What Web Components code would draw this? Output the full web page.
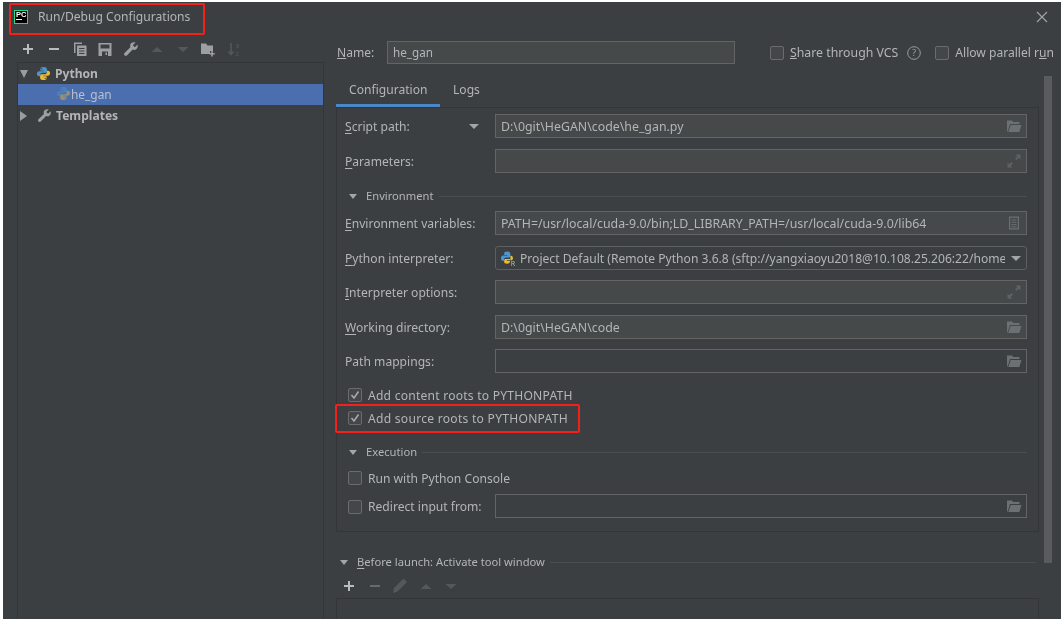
<!DOCTYPE html>
<html>
<head>
<meta charset="utf-8">
<title>Run/Debug Configurations</title>
<style>
  html, body { margin: 0; height: 100%; background: #fff; overflow: hidden; }
  u { text-underline-offset: 2px; }
</style>
</head>
<body>
<rd-dialog>
  <rd-tree slot="left"></rd-tree>

  <rd-name-row slot="right"></rd-name-row>
  <rd-tabs slot="right"></rd-tabs>
  <rd-panel slot="right">
    <rd-field icon="folder" filled drop><u>S</u>cript path:<span slot="value">D:\0git\HeGAN\code\he_gan.py</span></rd-field>
    <rd-field icon="expand" filled style="margin-top:11px"><u>P</u>arameters:</rd-field>
    <rd-section style="margin-top:13px">Environment</rd-section>
    <rd-field icon="doc" filled style="margin-top:5px"><u>E</u>nvironment variables:<span slot="value">PATH=/usr/local/cuda-9.0/bin;LD_LIBRARY_PATH=/usr/local/cuda-9.0/lib64</span></rd-field>
    <rd-field combo style="margin-top:11px"><u>P</u>ython interpreter:<span slot="value">Project Default (Remote Python 3.6.8 (sftp://yangxiaoyu2018@10.108.25.206:22/home</span></rd-field>
    <rd-field icon="expand" filled style="margin-top:10px"><u>I</u>nterpreter options:</rd-field>
    <rd-field icon="folder" filled style="margin-top:11px"><u>W</u>orking directory:<span slot="value">D:\0git\HeGAN\code</span></rd-field>
    <rd-field icon="folder" style="margin-top:10px">Path mappings:</rd-field>
    <rd-check checked style="margin:12px 0 0 3px;letter-spacing:.22px;--tshift:2px">Add content roots to PYTHONPATH</rd-check>
    <rd-check checked style="margin:3px 0 0 3px;letter-spacing:.26px;--tshift:2px">Add source roots to PYTHONPATH</rd-check>
    <rd-section style="margin-top:14px">Execution</rd-section>
    <rd-check style="margin:6px 0 0 3px;--tshift:2px">Run with Python Console</rd-check>
    <rd-field icon="folder" style="margin-top:6px"><rd-check style="margin-left:3px">Redirect input from:</rd-check></rd-field>
  </rd-panel>
  <rd-section slot="right" wide style="margin-top:20px"><u>B</u>efore launch: Activate tool window</rd-section>
  <rd-launch-tools slot="right"></rd-launch-tools>
  <rd-listbox slot="right"></rd-listbox>
</rd-dialog>

<script>
// all small icons live here, 16x16 viewBox unless noted
const ICONS = {
  plus: '<path d="M8 3v10M3 8h10" stroke="#b9bcbe" stroke-width="2"/>',
  minus: '<path d="M3 8h10" stroke="#b9bcbe" stroke-width="2"/>',
  copy: '<path d="M2 1.500h8V3H3.500v9H2z" fill="#9da0a2"/><path fill-rule="evenodd" d="M5 4.500h9.500V15H5zM7 7v1h5.500V7zm0 2.500v1h5.500v-1zm0 2.500v1h5.500v-1z" fill="#9da0a2"/>',
  save: '<path fill-rule="evenodd" d="M1.500 2h13v13h-13zM3.500 3.500V7.500h9V3.500zM5 10.500V15h6v-4.500zM8.500 11.500h1.500v2.500H8.500z" fill="#9da0a2"/>',
  wrench: '<path d="M14.500 3.500 11.800 6.200 9.800 4.200 12.500 1.500C10.500.8 8 1.500 7.300 3.600 7 4.600 7.100 5.500 7.400 6.300L1.600 12.100C.9 12.800.9 13.800 1.600 14.400 2.200 15 3.200 15 3.900 14.400L9.700 8.600C10.500 8.900 11.500 9 12.400 8.700 14.500 8 15.200 5.500 14.500 3.500Z" fill="#9da0a2"/>',
  up: '<path d="M2.500 11 8 6l5.500 5z" fill="#55585a"/>',
  down: '<path d="M2.500 6h11L8 11z" fill="#55585a"/>',
  newfolder: '<path d="M1 2.500h5L7.500 4.500H13v5.500H10v3H1z" fill="#9da0a2"/><path d="M12 10v5.500M9.200 12.800h5.500" stroke="#9da0a2" stroke-width="1.600"/>',
  sort: '<path d="M5 2v11M2.500 10.500 5 13.500l2.500-3" fill="none" stroke="#55585a" stroke-width="1.600"/><text x="9.500" y="7" font-size="7" font-family="Noto Sans" fill="#55585a">a</text><text x="9.500" y="14.500" font-size="7" font-family="Noto Sans" fill="#55585a">z</text>',
  python: '<path d="M8 1C5.300 1 4.700 2 4.700 3.200V5H8.300V5.600H3.200C1.900 5.600 1 6.700 1 8.300 1 10 1.800 11 3.100 11H4.500V9.200C4.500 8 5.500 7.200 6.700 7.200H10C11 7.200 11.600 6.500 11.600 5.600V3.200C11.600 2 10.500 1 8 1ZM6.200 2.200A.7.7 0 1 1 6.200 3.600.7.7 0 0 1 6.200 2.200Z" fill="#4a97cf"/><path d="M8 15C10.700 15 11.300 14 11.300 12.800V11H7.700V10.400H12.800C14.100 10.400 15 9.300 15 7.700 15 6 14.200 5 12.900 5H11.500V6.800C11.500 8 10.500 8.800 9.300 8.800H6C5 8.800 4.400 9.500 4.400 10.400V12.800C4.400 14 5.500 15 8 15ZM9.800 13.800A.7.7 0 1 1 9.800 12.400.7.7 0 0 1 9.800 13.800Z" fill="#e9bb31"/>',
  pyremote: '<path d="M6.500 0.500C4 .5 3.400 1.500 3.400 2.600V4.300H6.800V4.900H2.200C1 4.900 0 6 0 7.700 0 9.400.8 10.500 2 10.500H3.300V8.800C3.300 7.700 4.200 6.900 5.300 6.900H8.300C9.300 6.900 9.900 6.200 9.900 5.300V2.600C9.900 1.500 8.900.5 6.500.5Z" fill="#4a97cf"/><path d="M6.500 13.500C8.400 13.500 9 12.800 9.500 12V10.300H6.200V9.700H10V5H10.700C12 5 12.800 6 12.800 7.500 12.800 8.800 12 9.800 11.500 9.800H9.500V10 8.600H5C4 8.600 3.400 9.300 3.400 10.200V12C3.400 13 4.400 13.500 6.500 13.500Z" fill="#e9bb31"/><text x="10.500" y="16" font-size="7.500" font-family="Noto Sans" fill="#b9bcbe">R</text>',
  folder: '<path d="M1 2.500h5L7.200 4H13.500V6H4L1.700 13.500H1z" fill="#6b7072"/><path d="M4.700 7H15.500L13.300 14H2.300z" fill="#6b7072"/>',
  expand: '<path d="M9.500 1.500H14.500V6.500L12.700 4.700 10.500 6.900 9.100 5.500 11.300 3.300zM6.500 14.500H1.500V9.500L3.300 11.300 5.500 9.100 6.900 10.500 4.700 12.700z" fill="#5d6264"/>',
  doc: '<path fill-rule="evenodd" d="M3 1.500h10v13H3zM4.200 2.700v10.600h7.600V2.700z" fill="#6b7072"/><path d="M5.500 5h5M5.500 7.300h5M5.500 9.600h5M5.500 11.800h5" stroke="#6b7072"/>',
  help: '<circle cx="8" cy="8" r="6.300" fill="none" stroke="#9a9d9f" stroke-width="1"/><text x="8" y="11.300" text-anchor="middle" font-size="9.500" font-family="Noto Sans" fill="#9a9d9f">?</text>',
  pencil: '<path d="M11.500 .5 15 4 5.500 13.500 1 15 2 10z" fill="#55585a"/>',
  close: '<path d="M3 3l10 10M13 3 3 13" stroke="#a3a6a8" stroke-width="1.100"/>'
};

class RdIcon extends HTMLElement {
  connectedCallback() {
    const size = this.getAttribute('size') || 16;
    this.attachShadow({ mode: 'open' }).innerHTML = `
      <style>:host{display:inline-flex;flex:none;width:${size}px;height:${size}px}svg{display:block;overflow:visible}</style>
      <svg width="${size}" height="${size}" viewBox="0 0 16 16">${ICONS[this.getAttribute('name')] || ''}</svg>`;
  }
}

class RdDialog extends HTMLElement {
  constructor() {
    super();
    this.attachShadow({ mode: 'open' }).innerHTML = `
      <style>
        /* the reference is a scaled screenshot, hence the slight blur */
        :host { display: block; position: relative; box-sizing: border-box; margin: 2px 0 0 3px; height: 617px; overflow: hidden; filter: blur(.35px);
                background: #3c3f41; color: #b3b5b7; font: 12.1px/16px "Noto Sans", "Liberation Sans", sans-serif; }
        .title { display: flex; align-items: center; height: 30px; padding-left: 11px; }
        .logo { display: flex; flex-direction: column; box-sizing: border-box; width: 14px; height: 14px; margin-right: 10px;
                background: #000; border: 1px solid #21d789; color: #fff; font: 700 7.500px/7px "Liberation Sans", sans-serif; padding-left: 1px; }
        .logo i { display: block; width: 6px; height: 1px; margin-top: 1px; background: #fff; }
        .close { margin-left: auto; margin-right: 11px; }
        .body { display: flex; }
        .left { width: 321px; flex: none; padding-left: 14px; box-sizing: border-box; }
        .tools { display: flex; align-items: center; height: 30px; padding: 4px 0 0 3px; box-sizing: border-box; }
        .tools rd-icon { margin-right: 9.750px; }
        .right { width: 703px; margin-left: 12px; flex: none; }
        .scroll { position: absolute; left: 1041px; top: 74px; width: 8px; height: 487px; background: #595b5d; }
        .mark { position: absolute; box-sizing: border-box; border: 2px solid #f5201a; border-radius: 2px; }
      </style>
      <div class="title">
        <div class="logo"><span>PC</span><i></i></div>
        <span>Run/Debug Configurations</span>
        <rd-icon class="close" name="close"></rd-icon>
      </div>
      <div class="body">
        <div class="left">
          <div class="tools">
            <rd-icon name="plus"></rd-icon><rd-icon name="minus"></rd-icon><rd-icon name="copy"></rd-icon><rd-icon name="save"></rd-icon><rd-icon name="wrench"></rd-icon><rd-icon name="up"></rd-icon><rd-icon name="down"></rd-icon><rd-icon name="newfolder"></rd-icon><rd-icon name="sort"></rd-icon>
          </div>
          <slot name="left"></slot>
        </div>
        <div class="right"><slot name="right"></slot></div>
      </div>
      <div class="scroll"></div>
      <!-- the two red marks somebody drew on the screenshot -->
      <div class="mark" style="left:6px;top:1px;width:196px;height:32px"></div>
      <div class="mark" style="left:332px;top:402px;width:245px;height:29px"></div>`;
  }
}

class RdTree extends HTMLElement {
  constructor() {
    super();
    this.attachShadow({ mode: 'open' }).innerHTML = `
      <style>
        :host { display: block; width: 307px; height: 570px; box-sizing: border-box; border: 1px solid #333537; }
        .row { display: flex; align-items: center; box-sizing: border-box; height: 21px; font-weight: 700; }
        .arrow { width: 0; height: 0; flex: none; margin-left: 2px; }
        .open { border-left: 4.500px solid transparent; border-right: 4.500px solid transparent; border-top: 8px solid #9a9d9f; margin-right: 8px; }
        .shut { border-top: 5px solid transparent; border-bottom: 5px solid transparent; border-left: 7px solid #9a9d9f; margin-right: 10px; }
        .row rd-icon { margin-right: 4px; }
        .sel { background: #4b6eaf; padding: 0 0 2px 38px; font-weight: 400; font-size: 11.900px; color: #b9c0cc; }
        .sel rd-icon { opacity: .45; margin-right: 0; }
      </style>
      <div class="row"><span class="arrow open"></span><rd-icon name="python" size="15"></rd-icon>Python</div>
      <div class="row sel"><rd-icon name="python" size="15"></rd-icon>he_gan</div>
      <div class="row"><span class="arrow shut"></span><rd-icon name="wrench" size="15"></rd-icon>Templates</div>`;
  }
}

class RdCheck extends HTMLElement {
  constructor() {
    super();
    this.attachShadow({ mode: 'open' }).innerHTML = `
      <style>
        :host { display: flex; align-items: center; height: 20px; white-space: nowrap; }
        .box { box-sizing: border-box; width: 14px; height: 14px; margin-right: 6px; flex: none; border: 1px solid #6b6b6b; border-radius: 2px; background: #43474a; }
        svg { display: none; margin: 1px; }
        :host([checked]) svg { display: block; }
        .txt { padding-top: var(--tshift, 0); }
      </style>
      <div class="box"><svg width="10" height="10" viewBox="0 0 10 10"><path d="M1.500 5 4 8l4.500-6.500" fill="none" stroke="#a9acae" stroke-width="1.500"/></svg></div>
      <span class="txt"><slot></slot></span>`;
  }
}

class RdNameRow extends HTMLElement {
  constructor() {
    super();
    this.attachShadow({ mode: 'open' }).innerHTML = `
      <style>
        :host { display: flex; align-items: center; height: 23px; margin-top: 9px; white-space: nowrap; width: 740px; }
        .lbl { width: 50px; margin-left: 1px; flex: none; }
        .input { width: 348px; height: 23px; box-sizing: border-box; flex: none; padding: 2px 5px; background: #45494a; border: 1px solid #646464; font-size: 11.700px; }
        rd-check:first-of-type { margin-left: 35px; font-size: 12.300px; }
        rd-icon { margin: 0 13px 0 8px; }
      </style>
      <span class="lbl"><u>N</u>ame:</span>
      <div class="input">he_gan</div>
      <rd-check><u>S</u>hare through VCS</rd-check>
      <rd-icon name="help"></rd-icon>
      <rd-check>Allow parallel r<u>u</u>n</rd-check>`;
  }
}

class RdTabs extends HTMLElement {
  constructor() {
    super();
    this.attachShadow({ mode: 'open' }).innerHTML = `
      <style>
        :host { display: flex; margin-top: 8px; height: 35px; }
        .tab { box-sizing: border-box; padding: 10px 13px 0; }
        .on { width: 104px; border-bottom: 3px solid #4a88c7; }
      </style>
      <div class="tab on">Configuration</div>
      <div class="tab">Logs</div>`;
  }
}

class RdPanel extends HTMLElement {
  constructor() {
    super();
    this.attachShadow({ mode: 'open' }).innerHTML = `
      <style>
        /* --tshift nudges text down inside the rows, the box stays put */
        :host { display: block; box-sizing: border-box; width: 703px; border: 1px solid #333537; padding: 6px 11px 13px 8px; --tshift: 1px; }
      </style>
      <slot></slot>`;
  }
}

class RdField extends HTMLElement {
  constructor() {
    super();
    const icon = this.getAttribute('icon');
    this.attachShadow({ mode: 'open' }).innerHTML = `
      <style>
        :host { display: flex; align-items: center; height: 24px; white-space: nowrap; }
        .lbl { display: flex; align-items: center; width: 150px; flex: none; }
        .txt { padding-top: var(--tshift, 0); }
        .drop { margin-left: auto; margin-right: 16px; width: 0; height: 0; border-left: 5px solid transparent; border-right: 5px solid transparent; border-top: 5px solid #a3a6a8; display: none; }
        :host([drop]) .drop { display: block; }
        .input { display: flex; align-items: center; box-sizing: border-box; width: 532px; height: 24px; padding: 0 5px; border: 1px solid #646464; overflow: hidden; }
        :host([filled]) .input { background: #45494a; }
        :host([combo]) .input { border-color: #5e6060; border-radius: 3px; }
        .val { flex: 1; min-width: 0; overflow: hidden; font-size: 12.350px; padding-top: var(--tshift, 0); }
        :host([combo]) .val { font-size: 12.100px; }
        .py, .arrow { flex: none; display: none; }
        :host([combo]) .py { display: inline-flex; margin-right: 4px; }
        :host([combo]) .arrow { display: block; width: 0; height: 0; margin: 0 0 0 6px; border-left: 5px solid transparent; border-right: 5px solid transparent; border-top: 5px solid #a3a6a8; }
        .end { margin-right: -1px; }
      </style>
      <div class="lbl"><span class="txt"><slot></slot></span><span class="drop"></span></div>
      <div class="input">
        <rd-icon class="py" name="pyremote" size="15"></rd-icon>
        <div class="val"><slot name="value"></slot></div>
        <span class="arrow"></span>
        ${icon ? `<rd-icon class="end" name="${icon}"></rd-icon>` : ''}
      </div>`;
  }
}

class RdSection extends HTMLElement {
  constructor() {
    super();
    this.attachShadow({ mode: 'open' }).innerHTML = `
      <style>
        :host { display: flex; align-items: center; height: 20px; white-space: nowrap; padding-left: 4px; font-size: 11.200px; }
        :host([wide]) { width: 696px; }
        .arrow { width: 0; height: 0; margin-right: 9px; border-left: 4.500px solid transparent; border-right: 4.500px solid transparent; border-top: 5px solid #a3a6a8; }
        .line { flex: 1; height: 1px; margin-left: 5px; background: #4b4e50; }
      </style>
      <span class="arrow"></span><span><slot></slot></span><span class="line"></span>`;
  }
}

class RdLaunchTools extends HTMLElement {
  constructor() {
    super();
    this.attachShadow({ mode: 'open' }).innerHTML = `
      <style>
        :host { display: flex; align-items: center; height: 20px; margin-top: 4px; padding-left: 5px; gap: 9.500px; }
      </style>
      <rd-icon name="plus"></rd-icon><rd-icon name="minus" style="opacity:.35"></rd-icon><rd-icon name="pencil"></rd-icon><rd-icon name="up"></rd-icon><rd-icon name="down"></rd-icon>`;
  }
}

class RdListbox extends HTMLElement {
  constructor() {
    super();
    this.attachShadow({ mode: 'open' }).innerHTML = `
      <style>:host { display: block; box-sizing: border-box; width: 703px; height: 60px; margin-top: 2px; border: 1px solid #333537; }</style>`;
  }
}

// children first so the shadow markup upgrades straight away
customElements.define('rd-icon', RdIcon);
customElements.define('rd-check', RdCheck);
customElements.define('rd-tree', RdTree);
customElements.define('rd-name-row', RdNameRow);
customElements.define('rd-tabs', RdTabs);
customElements.define('rd-panel', RdPanel);
customElements.define('rd-field', RdField);
customElements.define('rd-section', RdSection);
customElements.define('rd-launch-tools', RdLaunchTools);
customElements.define('rd-listbox', RdListbox);
customElements.define('rd-dialog', RdDialog);
</script>
</body>
</html>
